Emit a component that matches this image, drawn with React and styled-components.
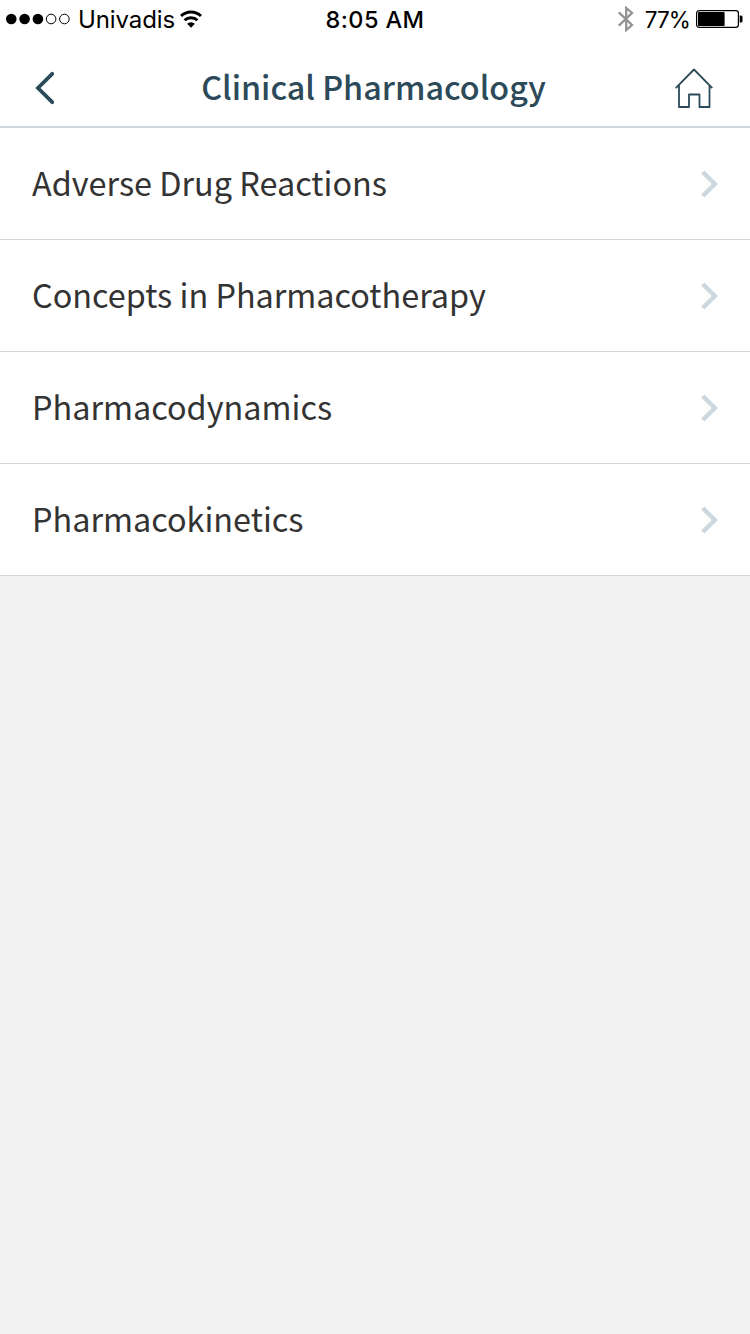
import styled, { createGlobalStyle } from "styled-components";

const GlobalStyle = createGlobalStyle`
  body {
    margin: 0;
    background-color: #f1f1f1;
    font-family: "Noto Sans CJK SC", "Noto Sans", sans-serif;
  }
`;

const Container = styled.div`
  min-height: 100vh;
  background-color: #f1f1f1;
`;

const StatusBar = styled.div`
  box-sizing: border-box;
  height: 40px;
  padding: 0px 7px 2px 6px;
  display: grid;
  grid-template-columns: 1fr auto 1fr;
  align-items: center;
  background-color: white;
  color: black;
  font-family: "Inter", "Liberation Sans", sans-serif;
  font-size: 24px;
  line-height: 36px;
`;

const StatusGroup = styled.div`
  display: flex;
  align-items: center;
  justify-content: ${(props) => props.$align || "flex-start"};

  svg {
    display: block;
    flex: none;
  }
`;

const Carrier = styled.span`
  margin: 0px 5px 0px 7px;
  padding-top: 2px;
  letter-spacing: -0.1px;
`;

const Time = styled.span`
  padding: 2px 0px 0px 1px;
  font-size: 23.5px;
  font-weight: 500;
  letter-spacing: 0.4px;
`;

const Percent = styled.span`
  margin: 0px 6px 0px 11px;
  padding-top: 2px;
  font-size: 22.5px;
  letter-spacing: -0.9px;
`;

const Header = styled.header`
  box-sizing: border-box;
  height: 88px;
  padding: 10px 36px 0px 35px;
  display: grid;
  grid-template-columns: 1fr auto 1fr;
  align-items: center;
  background-color: white;
  border-bottom: 2px solid #cfd9dd;
`;

const Title = styled.h1`
  margin: 0;
  padding: 0px 2px 4px 0px;
  color: #2c4a59;
  font-size: 32.3px;
  font-weight: 500;
  line-height: 60px;
  white-space: nowrap;
`;

const IconButton = styled.button`
  padding: 0;
  border: none;
  background: none;
  justify-self: ${(props) => props.$side};

  svg {
    display: block;
  }
`;

const List = styled.ul`
  margin: 0;
  padding: 0;
  list-style: none;
`;

const Item = styled.li`
  box-sizing: border-box;
  height: 112px;
  padding: 0px 32px;
  display: flex;
  align-items: center;
  justify-content: space-between;
  background-color: white;
  border-bottom: 1px solid #d2d9dc;
`;

const Label = styled.span`
  padding-bottom: 4px;
  color: #333333;
  font-size: 32.4px;
  line-height: 48px;
`;

const Signal = () => (
  <svg width="65" height="12" viewBox="0 0 65 12">
    {[5.3, 18.6, 31.9].map((x) => (
      <circle key={x} cx={x} cy="6" r="5.3" />
    ))}
    {[45.1, 58.4].map((x) => (
      <circle key={x} cx={x} cy="6" r="4.8" fill="none" stroke="black" />
    ))}
  </svg>
);

const Wifi = () => (
  <svg width="22" height="18" viewBox="0 0 22 18">
    <g fill="none" stroke="black" strokeWidth="3">
      <path d="M1 6a14.2 14.2 0 0 1 20 0" />
      <path d="M4.6 10.3a9.1 9.1 0 0 1 12.8 0" />
    </g>
    <path d="M7.1 13.8a5.6 5.6 0 0 1 7.8 0L11 17.8z" />
  </svg>
);

const Bluetooth = () => (
  <svg width="16" height="26" viewBox="0 0 16 26">
    <path
      d="M.8 6.3 14 19 8.2 24V2L14 7 .8 19.7"
      fill="none"
      stroke="#929292"
      strokeWidth="2.3"
    />
  </svg>
);

const Battery = () => (
  <svg width="47" height="18" viewBox="0 0 47 18">
    <rect x="0.6" y="0.6" width="41.8" height="16.8" rx="2.6" fill="none" stroke="black" strokeWidth="1.2" />
    <rect x="2" y="2" width="26.6" height="14" rx="0.8" />
    <path d="M43.7 5.5h1.2q1.6 0 1.6 1.6v3.8q0 1.6-1.6 1.6h-1.2z" />
  </svg>
);

const BackIcon = () => (
  <svg width="20" height="34" viewBox="0 0 20 34">
    <path
      d="M17.2 2.8 3 17l14.2 14.2"
      fill="none"
      stroke="#2c4a59"
      strokeWidth="3.8"
      strokeLinecap="round"
    />
  </svg>
);

const HomeIcon = () => (
  <svg width="39" height="40" viewBox="0 0 39 40">
    <path
      d="M.7 20.1 19 1.5l18.3 18.6M4 17v22h10V26.5h10.5V39h10V17"
      fill="none"
      stroke="#2c4a59"
      strokeWidth="1.8"
      strokeLinejoin="round"
    />
  </svg>
);

const Chevron = () => (
  <svg width="17" height="28" viewBox="0 0 17 28">
    <path d="M1.8 2.2 13.8 14 1.8 25.8" fill="none" stroke="#cfd9dd" strokeWidth="4.5" />
  </svg>
);

const topics = [
  "Adverse Drug Reactions",
  "Concepts in Pharmacotherapy",
  "Pharmacodynamics",
  "Pharmacokinetics",
];

const App = () => {
  return (
    <Container>
      <GlobalStyle />
      <StatusBar>
        <StatusGroup>
          <Signal />
          <Carrier>Univadis</Carrier>
          <Wifi />
        </StatusGroup>
        <Time>8:05 AM</Time>
        <StatusGroup $align="flex-end">
          <Bluetooth />
          <Percent>77%</Percent>
          <Battery />
        </StatusGroup>
      </StatusBar>
      <Header>
        <IconButton $side="start" aria-label="Back">
          <BackIcon />
        </IconButton>
        <Title>Clinical Pharmacology</Title>
        <IconButton $side="end" aria-label="Home">
          <HomeIcon />
        </IconButton>
      </Header>
      <List>
        {topics.map((topic) => (
          <Item key={topic}>
            <Label>{topic}</Label>
            <Chevron />
          </Item>
        ))}
      </List>
    </Container>
  );
};

export default App;
